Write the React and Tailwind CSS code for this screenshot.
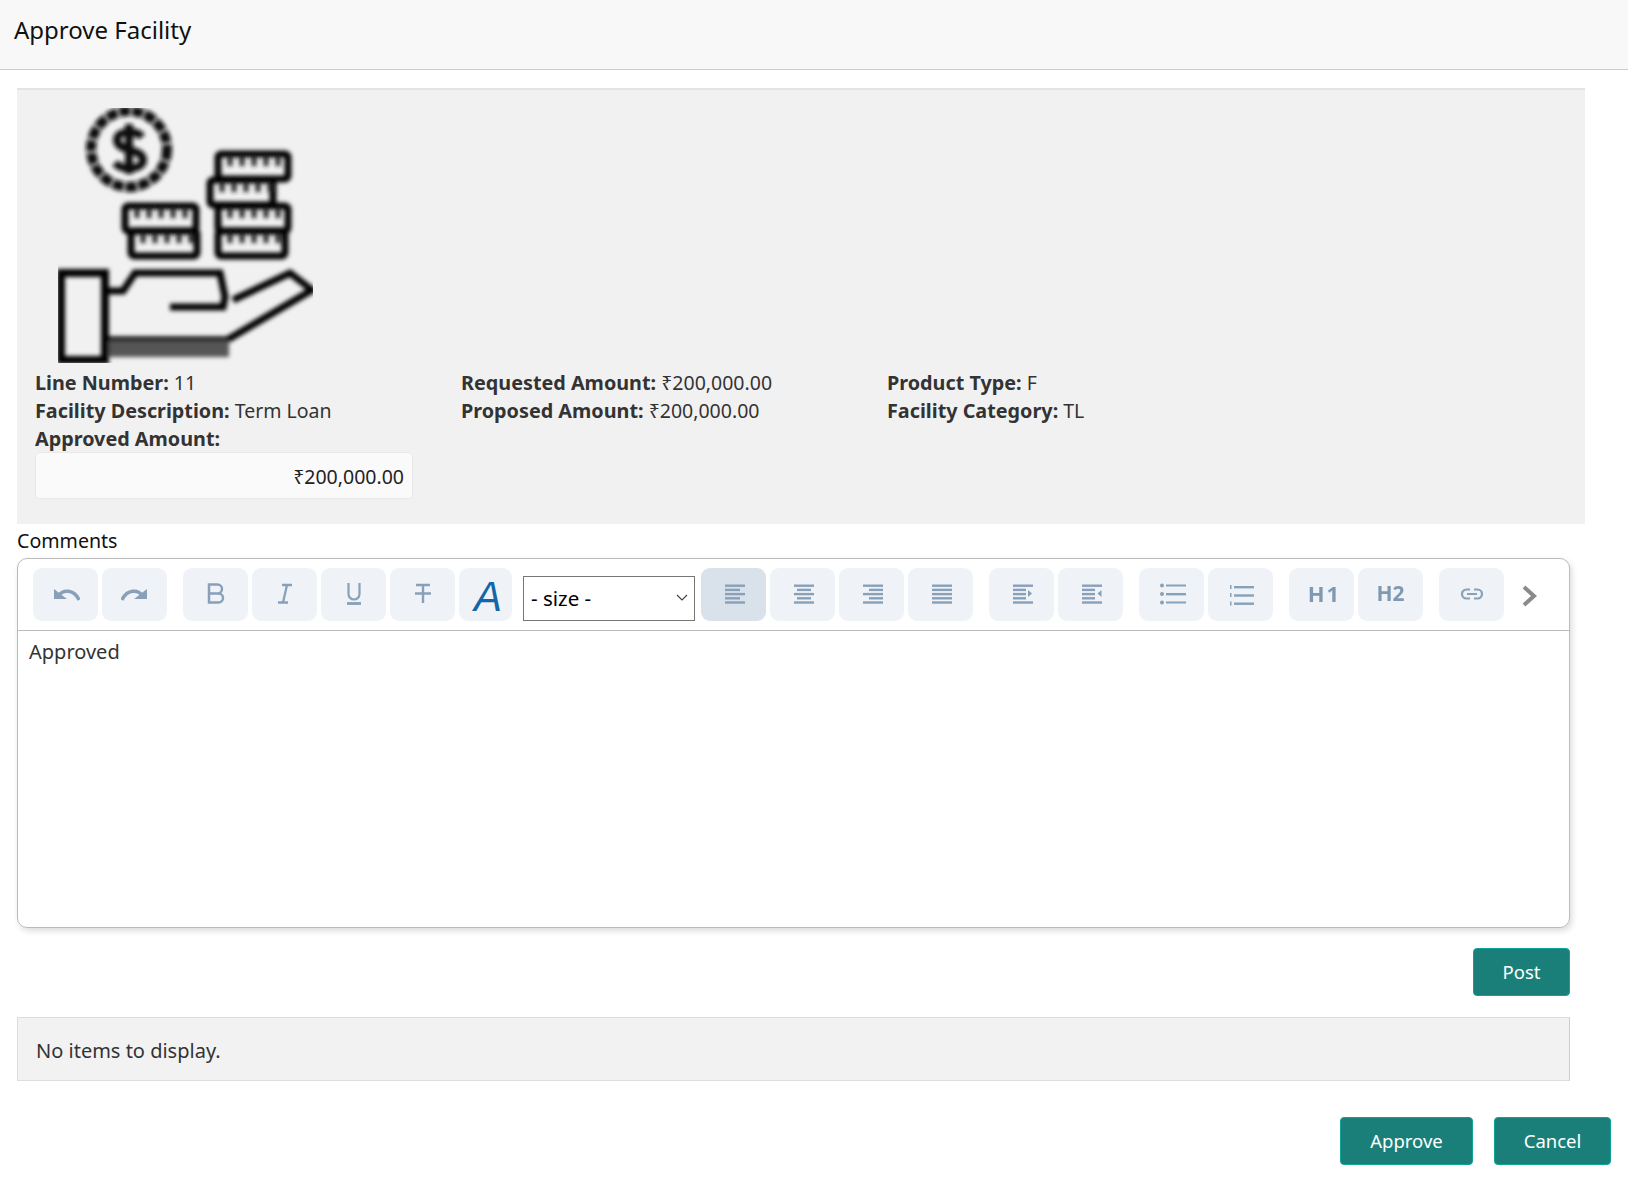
import React from "react";

const ICON = "#88a0b8";

const lines = {
  left: [20, 15, 20, 15, 20],
  center: [20, 14, 20, 14, 20],
  right: [20, 14, 20, 14, 20],
  justify: [20, 20, 20, 20, 20],
};

const AlignIcon = ({ type }) => (
  <svg className="blur-[0.3px]" width="24" height="24" viewBox="0 0 24 24" fill={ICON}>
    {lines[type].map((w, i) => {
      const x = type === "left" ? 3 : type === "right" ? 23 - w : 3 + (20 - w) / 2;
      return <rect key={i} x={x} y={1.5 + i * 4.2} width={w} height="2.4" />;
    })}
  </svg>
);

const IndentIcon = ({ out }) => (
  <svg className="blur-[0.3px]" width="24" height="24" viewBox="0 0 24 24" fill={ICON}>
    <rect x="3" y="1.500" width="20" height="2.400" />
    <rect x="3" y="5.700" width="13" height="2.400" />
    <rect x="3" y="9.900" width="13" height="2.400" />
    <rect x="3" y="14.100" width="13" height="2.400" />
    <rect x="3" y="18.300" width="20" height="2.400" />
    {out ? <path d="M22.500 7v7l-4-3.500z" /> : <path d="M18 7v7l4-3.500z" />}
  </svg>
);

const icons = {
  undo: (
    <svg className="blur-[0.3px]" width="28" height="24" viewBox="0 0 28 24" fill="none">
      <path d="M2 6v10h13z" fill={ICON} />
      <path d="M6 13c5-7 16-7 21 4" stroke={ICON} strokeWidth="3.500" />
    </svg>
  ),
  redo: (
    <svg className="blur-[0.3px]" width="28" height="24" viewBox="0 0 28 24" fill="none">
      <path d="M26 6v10H13z" fill={ICON} />
      <path d="M22 13c-5-7-16-7-21 4" stroke={ICON} strokeWidth="3.500" />
    </svg>
  ),
  bold: (
    <svg className="blur-[0.3px]" width="24" height="24" viewBox="0 0 24 24" fill="none" stroke={ICON} strokeWidth="2.500">
      <path d="M5 1.500h8.500a4.500 4.500 0 0 1 0 9H5zM5 10.500h9.500a4.500 4.500 0 0 1 0 9H5z" />
    </svg>
  ),
  italic: (
    <svg className="blur-[0.3px]" width="24" height="24" viewBox="0 0 24 24" fill="none" stroke={ICON} strokeWidth="2.300">
      <path d="M9 2h10M5 19.500h10M14 2l-4 17.500" />
    </svg>
  ),
  underline: (
    <svg className="blur-[0.3px]" width="24" height="24" viewBox="0 0 24 24" fill="none" stroke={ICON} strokeWidth="2.200">
      <path d="M6.500 0v11a5.500 5.500 0 0 0 11 0V0" />
      <path d="M5 20.500h14" strokeWidth="2.800" />
    </svg>
  ),
  strike: (
    <svg className="blur-[0.3px]" width="24" height="24" viewBox="0 0 24 24" fill="none" stroke={ICON} strokeWidth="2.400">
      <path d="M5 2h14M12 2v18M4 10.500h16" />
    </svg>
  ),
  bullets: (
    <svg className="blur-[0.3px]" width="28" height="24" viewBox="0 0 28 24" fill={ICON}>
      <circle cx="4" cy="2.500" r="2" />
      <circle cx="4" cy="11" r="2" />
      <circle cx="4" cy="19.500" r="2" />
      <rect x="8" y="1.500" width="20" height="2" />
      <rect x="8" y="10" width="20" height="2.400" />
      <rect x="8" y="18.500" width="20" height="2" />
    </svg>
  ),
  numbers: (
    <svg className="blur-[0.3px]" width="28" height="24" viewBox="0 0 28 24" fill={ICON}>
      <rect x="3" y="2" width="1.500" height="4" />
      <rect x="3" y="10" width="1.500" height="4" />
      <rect x="3" y="18.500" width="1.500" height="4" />
      <rect x="7" y="3" width="20" height="2.400" />
      <rect x="7" y="11.300" width="20" height="2.400" />
      <rect x="7" y="19.500" width="20" height="2.400" />
    </svg>
  ),
  link: (
    <svg className="blur-[0.3px]" width="26" height="24" viewBox="0 0 26 24" fill="none" stroke={ICON} strokeWidth="2.200">
      <path d="M11 6.500H7.500a4.500 4.500 0 0 0 0 9H11M15 6.500h3.500a4.500 4.500 0 0 1 0 9H15M8 11h10" />
    </svg>
  ),
};

const Btn = ({ children, active, width, className }) => (
  <button
    className={`h-[53px] shrink-0 rounded-[9px] flex items-center justify-center ${width || "w-[65px]"} ${
      active ? "bg-[#d9e1ea]" : "bg-[#eff3f8]"
    } ${className || ""}`}
  >
    {children}
  </button>
);

const Coin = ({ x, y, w }) => (
  <g>
    <rect x={x} y={y} width={w} height="25" rx="3" fill="none" stroke="#000" strokeWidth="7" />
    <path
      d={`M${x + 12} ${y + 2}v10M${x + 24} ${y + 2}v10M${x + 36} ${y + 2}v10M${x + 48} ${y + 2}v10M${x + 60} ${y + 2}v10`}
      stroke="#222"
      strokeWidth="5"
    />
  </g>
);

// hand holding coins, the source image is a small png scaled up so it gets a blur
const FacilityIcon = () => (
  <svg width="255" height="255" viewBox="0 0 255 255" fill="none" className="block">
    <defs>
      <filter id="soft" x="-10%" y="-10%" width="120%" height="120%">
        <feGaussianBlur stdDeviation="1.900" />
      </filter>
    </defs>
    <g filter="url(#soft)">
      <circle cx="71" cy="41" r="38" stroke="#111" strokeWidth="10" strokeDasharray="11 2" />
      <path d="M84 29c-6-7-25-7-25 3 0 12 26 8 26 20 0 10-20 11-28 3M71 16v50" stroke="#111" strokeWidth="8" />
      <Coin x={160} y={46} w={70} />
      <Coin x={152} y={72} w={63} />
      <Coin x={160} y={98} w={70} />
      <Coin x={160} y={123} w={67} />
      <Coin x={67} y={98} w={71} />
      <Coin x={73} y={123} w={66} />
      <path
        d="M47 183h18l12-18h85l5 24-2 10h-53M175 192l57-27 22 17-85 50H47"
        stroke="#000"
        strokeWidth="7"
      />
      <rect x="47" y="233" width="124" height="16" fill="#555" />
      <rect x="3" y="165" width="44" height="87" stroke="#000" strokeWidth="8" />
    </g>
  </svg>
);

const Field = ({ label, value }) => (
  <div className="h-7 leading-7 whitespace-nowrap">
    <span className="text-[19.800px] font-bold">{label}:</span> {value}
  </div>
);

const TealBtn = ({ children, className }) => (
  <button
    className={`h-12 rounded border border-[#0fa398] bg-[#1b7f79] text-[18.500px] text-white ${className}`}
  >
    {children}
  </button>
);

export default function App() {
  return (
    <div className="h-[1188px] w-[1628px] bg-white font-['Noto_Sans','Open_Sans',sans-serif] text-[#333]">
      <div className="flex h-[70px] items-center border-b border-[#ccc] bg-[#f8f8f8] pb-[10px] pl-[14px] text-[24px] text-[#111]">
        Approve Facility
      </div>

      <div className="pl-[17px] pt-[18px]">
        <div className="h-[436px] w-[1568px] border-t-2 border-[#e3e3e3] bg-[#f1f1f1] pl-[18px] pt-[18px] text-[19.500px]">
          <div className="pl-[23px]">
            <FacilityIcon />
          </div>
          <div className="mt-[6px] grid grid-cols-[426px_426px_1fr]">
            <div>
              <Field label="Line Number" value="11" />
              <Field label="Facility Description" value="Term Loan" />
              <Field label="Approved Amount" value="" />
              <div className="-mt-[1px] flex h-[47px] w-[378px] items-center justify-end rounded-sm border border-[#e8e8e8] bg-[#fafafa] pr-2 pt-[3px] text-[#222]">
                ₹200,000.00
              </div>
            </div>
            <div>
              <Field label="Requested Amount" value="₹200,000.00" />
              <Field label="Proposed Amount" value="₹200,000.00" />
            </div>
            <div>
              <Field label="Product Type" value="F" />
              <Field label="Facility Category" value="TL" />
            </div>
          </div>
        </div>

        <div className="flex h-[34px] items-center text-[19.600px] text-[#111]">Comments</div>

        <div className="h-[370px] w-[1553px] rounded-[10px] border border-[#bbb] shadow-[2px_3px_6px_rgba(0,0,0,0.14)]">
          <div className="flex h-[72px] items-start border-b border-[#bbb] pl-[15px] pt-[9px]">
            <Btn>{icons.undo}</Btn>
            <Btn className="ml-1">{icons.redo}</Btn>
            <Btn className="ml-4">{icons.bold}</Btn>
            <Btn className="ml-1">{icons.italic}</Btn>
            <Btn className="ml-1">{icons.underline}</Btn>
            <Btn className="ml-1">{icons.strike}</Btn>
            <Btn width="w-[53px]" className="ml-1 pl-[5px] pt-[4px] font-['Liberation_Sans',sans-serif] text-[42px] italic text-[#1566a9]">A</Btn>
            <div className="relative ml-[11px] mt-2 h-[45px] w-[172px] shrink-0">
              <select className="h-full w-full appearance-none border border-[#767676] bg-white pl-[7px] text-[20.500px] text-black">
                <option>- size -</option>
              </select>
              <svg className="absolute right-[6px] top-[17px]" width="14" height="10" viewBox="0 0 14 10" fill="none" stroke="#444" strokeWidth="1.200">
                <path d="M2 2l5 5 5-5" />
              </svg>
            </div>
            <Btn active className="ml-[6px]"><AlignIcon type="left" /></Btn>
            <Btn className="ml-1"><AlignIcon type="center" /></Btn>
            <Btn className="ml-1"><AlignIcon type="right" /></Btn>
            <Btn className="ml-1"><AlignIcon type="justify" /></Btn>
            <Btn className="ml-4"><IndentIcon /></Btn>
            <Btn className="ml-1"><IndentIcon out /></Btn>
            <Btn className="ml-4">{icons.bullets}</Btn>
            <Btn className="ml-1">{icons.numbers}</Btn>
            <Btn className="ml-4 pb-[2px] pl-[6px] text-[22px] font-bold tracking-[2px] text-[#7f99b3] blur-[0.4px]">H1</Btn>
            <Btn className="ml-1 pb-[2px] text-[21px] font-bold text-[#7f99b3] blur-[0.4px]">H2</Btn>
            <Btn className="ml-4">{icons.link}</Btn>
            <svg className="ml-[18px] mt-[17px]" width="16" height="22" viewBox="0 0 16 22" fill="none" stroke="#8a8a8a" strokeWidth="4">
              <path d="M2 2l10 9-10 9" />
            </svg>
          </div>
          <div className="pl-[11px] pt-[7px] text-[20px] leading-7">Approved</div>
        </div>

        <div className="mt-5 flex w-[1553px] justify-end">
          <TealBtn className="w-[97px]">Post</TealBtn>
        </div>

        <div className="mt-[21px] flex h-[64px] w-[1553px] items-center border border-[#ddd] border-r-[#ccc] bg-[#f2f2f2] pl-[18px] pt-[3px] text-[20px]">
          No items to display.
        </div>

        <div className="mt-[36px] flex w-[1594px] justify-end gap-[21px]">
          <TealBtn className="w-[133px]">Approve</TealBtn>
          <TealBtn className="w-[117px]">Cancel</TealBtn>
        </div>
      </div>
    </div>
  );
}
